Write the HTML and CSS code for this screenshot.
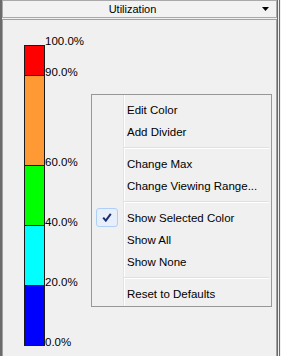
FILE: index.html
```html
<!DOCTYPE html>
<html lang="en">
<head>
    <meta charset="UTF-8">
    <title>Utilization</title>
    <link rel="stylesheet" href="styles.css">
</head>
<body>
    <div class="window">
        <div class="edge"></div>

        <div class="panel">
            <!-- Title bar -->
            <div class="header">
                <span class="title">Utilization</span>
                <span class="drop">
                    <svg width="7" height="4" viewBox="0 0 7 4"><polygon points="0,0 7,0 3.5,4" fill="#000"/></svg>
                </span>
            </div>

            <!-- Color scale -->
            <div class="content">
                <div class="gauge">
                    <div class="top-label">100.0%</div>
                    <div class="row">
                        <div class="seg seg-first red"></div>
                        <span class="tick">90.0%</span>
                    </div>
                    <div class="row">
                        <div class="seg orange"></div>
                        <span class="tick">60.0%</span>
                    </div>
                    <div class="row">
                        <div class="seg green"></div>
                        <span class="tick">40.0%</span>
                    </div>
                    <div class="row">
                        <div class="seg cyan"></div>
                        <span class="tick">20.0%</span>
                    </div>
                    <div class="row">
                        <div class="seg blue"></div>
                        <span class="tick">0.0%</span>
                    </div>
                </div>

                <!-- Context menu -->
                <div class="menu">
                    <div class="item">Edit Color</div>
                    <div class="item">Add Divider</div>
                    <div class="sep"></div>
                    <div class="item">Change Max</div>
                    <div class="item">Change Viewing Range...</div>
                    <div class="sep"></div>
                    <div class="item">
                        <span class="check">
                            <svg width="10" height="9" viewBox="0 0 10 9"><path d="M1.2 4.6 L3.8 7.6 L8.8 0.8" fill="none" stroke="#1d2d70" stroke-width="2"/></svg>
                        </span>
                        Show Selected Color
                    </div>
                    <div class="item">Show All</div>
                    <div class="item">Show None</div>
                    <div class="sep"></div>
                    <div class="item">Reset to Defaults</div>
                </div>
            </div>
        </div>

        <div class="sash"></div>
        <div class="gap"></div>
    </div>
</body>
</html>
```

FILE: styles.css
```css
body {
    margin: 0;
    background-color: #f0f0f0;
    font-family: "Liberation Sans", Arial, sans-serif;
    font-size: 11px;
    color: #000;
}
.window {
    display: flex;
    width: 281px;
    height: 356px;
    overflow: hidden;
}
.edge {
    width: 2px;
    background-color: #6b6b6b;
}
.sash {
    width: 1px;
    border-left: 1px solid #6b6b6b;
    border-right: 1px solid #6b6b6b;
}
.gap {
    width: 1px;
}
.panel {
    flex: 1;
    display: flex;
    flex-direction: column;
}
.header {
    height: 18px;
    box-sizing: border-box;
    border: 1px solid #a9a9a9;
    background-color: #f2f2f2;
    display: flex;
    align-items: center;
}
.title {
    flex: 1;
    text-align: center;
    line-height: 14px;
}
.drop {
    width: 14px;
    display: flex;
    align-items: center;
}
.drop svg {
    display: block;
}
.content {
    flex: 1;
    margin-top: 1px;
    border: 1px solid #a0a0a0;
    border-bottom: none;
    position: relative;
}
.gauge {
    padding: 16px 0 0 21px;
    font-size: 11.5px;
}
.top-label {
    margin-left: 21px;
    line-height: 11px;
    margin-bottom: -2px;
}
.row {
    display: flex;
}
.seg {
    width: 21px;
    box-sizing: border-box;
    border: 1px solid #1a1a1a;
    border-top: none;
}
.seg-first {
    border-top: 1px solid #1a1a1a;
}
.tick {
    align-self: flex-end;
    line-height: 11px;
    margin-bottom: -2px;
}
.red { background-color: #ff0000; height: 31px; }
.orange { background-color: #ff9933; height: 90px; }
.green { background-color: #00ff00; height: 60px; }
.cyan { background-color: #00ffff; height: 60px; }
.blue { background-color: #0000ff; height: 60px; }

.menu {
    position: absolute;
    left: 88px;
    top: 74px;
    width: 181px;
    box-sizing: border-box;
    padding: 4px 2px 1px;
    border: 1px solid #979797;
    background-color: #f0f0f0;
    background-image: linear-gradient(to right, transparent 31px, #e2e3e3 31px, #e2e3e3 32px, #ffffff 32px, #ffffff 33px, transparent 33px);
    font-size: 11.5px;
}
.item {
    height: 22px;
    line-height: 22px;
    padding-left: 33px;
    position: relative;
}
.sep {
    height: 0;
    margin: 4px 0 4px 30px;
    border-top: 1px solid #e0e0e0;
    border-bottom: 1px solid #fff;
}
.check {
    position: absolute;
    left: 2px;
    top: 1px;
    width: 22px;
    height: 19px;
    box-sizing: border-box;
    border: 1px solid #aecff7;
    border-radius: 3px;
    background-color: #e6effa;
    display: flex;
    align-items: center;
    justify-content: center;
}
.check svg {
    display: block;
}
```
